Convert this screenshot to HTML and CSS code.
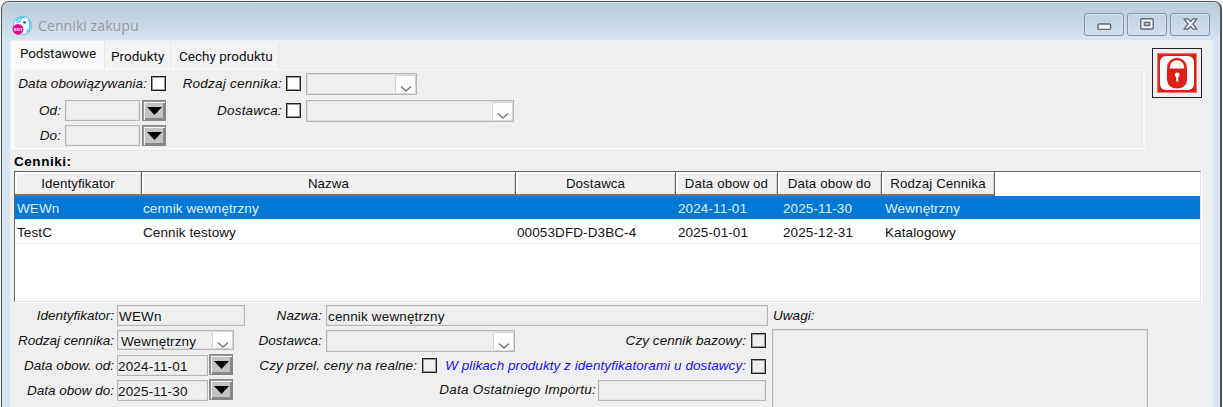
FILE: index.html
```html
<!DOCTYPE html>
<html lang="pl">
<head>
  <meta charset="UTF-8">
  <title>Cenniki zakupu</title>
  <link rel="stylesheet" href="styles.css">
</head>
<body>
  <svg width="0" height="0" class="defs">
    <symbol id="chevron" viewBox="0 0 12 8"><path d="M1 1.5 L6 6 L11 1.5" fill="none" stroke="#777" stroke-width="1.4"/></symbol>
    <symbol id="arrow" viewBox="0 0 15 8"><path d="M0 0 H15 L7.5 8 Z" fill="#000"/></symbol>
  </svg>
  <div class="window">
    <div class="titlebar">
      <svg class="app-icon" width="21" height="21" viewBox="0 0 21 21">
        <circle cx="10.5" cy="10.5" r="9.3" fill="#e6f7fd" stroke="#62c6ea" stroke-width="1"/>
        <path d="M4 6 Q8 1 13 3 M16.5 4.5 Q20 10 16 17 M5 8 L9 5" fill="none" stroke="#48b9e4" stroke-width="1.3"/>
        <path d="M8 2 L10 4 L8 7 Z M15 14 L18 14 L14 19 Z" fill="#7ed0ee"/>
        <circle cx="12.5" cy="7.5" r="1.3" fill="#145a87"/>
        <circle cx="6" cy="14.3" r="5.4" fill="#e5098a"/>
        <text x="1.9" y="16" class="app-text">EXIT</text>
      </svg>
      <span class="title">Cenniki zakupu</span>
      <div class="win-buttons">
        <div class="win-btn"><svg width="15" height="8" viewBox="0 0 15 8"><rect x="1" y="1" width="12.6" height="5.4" rx="1" fill="#f5f5f5" stroke="#626a76" stroke-width="1.4"/></svg></div>
        <div class="win-btn restore"><svg width="14" height="12" viewBox="0 0 14 12"><rect x=".8" y=".8" width="12.4" height="10.2" rx="1" fill="#f5f5f5" stroke="#626a76" stroke-width="1.4"/><rect x="4.3" y="4.3" width="5.4" height="3.2" fill="#b5c5d5" stroke="#626a76" stroke-width="1.3"/></svg></div>
        <div class="win-btn restore"><svg width="15" height="12" viewBox="0 0 15 12"><path d="M1 .8 H4.8 L7.5 3.4 L10.2 .8 H14 L9.8 6 L14 11.2 H10.2 L7.5 8.5 L4.8 11.2 H1 L5.2 6 Z" fill="#f5f5f5" stroke="#626a76" stroke-width="1.3" stroke-linejoin="round"/></svg></div>
      </div>
    </div>

    <div class="client">
      <div class="top">
        <div class="tab-control">
          <div class="tabs">
            <div class="tab active">Podstawowe</div>
            <div class="tab produkty">Produkty</div>
            <div class="tab cechy">Cechy produktu</div>
          </div>
          <div class="tab-panel">
            <div class="filter-dates">
              <div class="line first"><label class="obow">Data obowiązywania:</label><span class="check"></span></div>
              <div class="line"><label>Od:</label><span class="field date"></span><span class="drop"><svg width="15" height="8"><use href="#arrow"/></svg></span></div>
              <div class="line"><label>Do:</label><span class="field date"></span><span class="drop"><svg width="15" height="8"><use href="#arrow"/></svg></span></div>
            </div>
            <div class="filter-type">
              <div class="line first"><label>Rodzaj cennika:</label><span class="check"></span><span class="select kind"><i><svg width="12" height="8"><use href="#chevron"/></svg></i></span></div>
              <div class="line"><label>Dostawca:</label><span class="check"></span><span class="select supplier"><i><svg width="12" height="8"><use href="#chevron"/></svg></i></span></div>
            </div>
          </div>
        </div>
        <div class="lock">
          <svg width="40" height="40" viewBox="0 0 40 40">
            <rect width="40" height="40" fill="#de2018"/>
            <rect x=".5" y=".5" width="39" height="39" fill="none" stroke="#f0766f"/>
            <rect x="3" y="3" width="34" height="34" rx="6" fill="#fff"/>
            <path d="M11.5 17 V14 A8.5 8 0 0 1 28.5 14 V17" fill="none" stroke="#de2018" stroke-width="2.6"/>
            <path d="M10 15.5 H30 V27 Q29 35.5 20 35.5 Q11 35.5 10 27 Z" fill="#de2018"/>
            <path d="M17.8 22.5 A2.4 2.4 0 1 1 21.3 24 V28.5 H19.2 V24 Z" fill="#fff"/>
          </svg>
        </div>
      </div>

      <div class="list-title">Cenniki:</div>
      <div class="list">
        <div class="row head">
          <div>Identyfikator</div><div>Nazwa</div><div>Dostawca</div><div>Data obow od</div><div>Data obow do</div><div>Rodzaj Cennika</div>
        </div>
        <div class="row selected">
          <div>WEWn</div><div>cennik wewnętrzny</div><div></div><div>2024-11-01</div><div>2025-11-30</div><div>Wewnętrzny</div>
        </div>
        <div class="row">
          <div>TestC</div><div>Cennik testowy</div><div>00053DFD-D3BC-4</div><div>2025-01-01</div><div>2025-12-31</div><div>Katalogowy</div>
        </div>
      </div>

      <div class="details">
        <div class="col-left">
          <div class="line"><label>Identyfikator:</label><span class="field id">WEWn</span></div>
          <div class="line"><label>Rodzaj cennika:</label><span class="select type">Wewnętrzny<i><svg width="12" height="8"><use href="#chevron"/></svg></i></span></div>
          <div class="line"><label>Data obow. od:</label><span class="field day">2024-11-01</span><span class="drop"><svg width="15" height="8"><use href="#arrow"/></svg></span></div>
          <div class="line"><label>Data obow do:</label><span class="field day">2025-11-30</span><span class="drop"><svg width="15" height="8"><use href="#arrow"/></svg></span></div>
        </div>
        <div class="col-mid">
          <div class="line"><label class="short">Nazwa:</label><span class="field name">cennik wewnętrzny</span></div>
          <div class="line"><label class="short">Dostawca:</label><span class="select sup"><i><svg width="12" height="8"><use href="#chevron"/></svg></i></span><label class="push">Czy cennik bazowy:</label><span class="check"></span></div>
          <div class="line"><label class="real">Czy przel. ceny na realne:</label><span class="check"></span><label class="push files">W plikach produkty z identyfikatorami u dostawcy:</label><span class="check low"></span></div>
          <div class="line"><label class="push import">Data Ostatniego Importu:</label><span class="field imp"></span></div>
        </div>
        <div class="col-right">
          <label>Uwagi:</label>
          <div class="memo"></div>
        </div>
      </div>
    </div>
  </div>
</body>
</html>
```

FILE: styles.css
```css
* {
  box-sizing: border-box;
}
body {
  margin: 0;
  width: 1223px;
  height: 407px;
  overflow: hidden;
  background: #f3f5f3;
  font-family: "Liberation Sans", Arial, sans-serif;
  font-size: 13.5px;
  line-height: 20px;
  color: #111;
  white-space: nowrap;
}
svg {
  display: block;
}
.defs {
  position: absolute;
}
.window {
  width: 1221px;
  height: 420px;
  margin: 1px 0 0 1px;
  border: 1px solid #555;
  border-right-width: 2px;
  border-radius: 8px 8px 0 0;
  background: #d7e4f1;
  overflow: hidden;
}
.titlebar {
  display: flex;
  height: 38px;
  padding: 12px 10px 0 10px;
  border-top: 1px solid #d3dde5;
  background: linear-gradient(#b9cad7, #d7e4f2);
}
.app-text {
  font-size: 4px;
  font-weight: bold;
  fill: #fff;
}
.title {
  margin: 1px 0 0 5px;
  font-family: "Open Sans", sans-serif;
  font-size: 14.2px;
  line-height: 20px;
  color: #97999d;
}
.win-buttons {
  display: flex;
  gap: 3px;
  margin: -2px 0 0 auto;
}
.win-btn {
  display: flex;
  justify-content: center;
  width: 40px;
  height: 23px;
  padding-top: 9px;
  border: 1px solid #8393ad;
  border-radius: 3px;
  box-shadow: inset 0 0 0 1px #d4e0ea;
}
.win-btn.restore {
  padding-top: 4px;
}
.client {
  height: 380px;
  margin: 0 7px 0 8px;
  background: #efefef;
}

/* tabs and filters */
.top {
  display: flex;
  height: 110px;
  padding-left: 1px;
}
.tab-control {
  width: 1134px;
}
.tabs {
  display: flex;
  align-items: flex-end;
  height: 29px;
}
.tab {
  height: 26px;
  padding: 3px 0 0 6px;
  border-right: 1px solid #e6e6e6;
  background: #f3f3f3;
  font-family: Roboto, sans-serif;
  font-size: 13.5px;
}
.tab.active {
  width: 94px;
  height: 28px;
  padding: 2px 0 0 9px;
  background: #fafafa;
  letter-spacing: -0.15px;
}
.tab.produkty {
  width: 66px;
}
.tab.cechy {
  width: 108px;
  padding-left: 8px;
}
.tab-panel {
  display: flex;
  height: 81px;
  padding-top: 3px;
  border: 2px solid #f8f8f8;
  border-left-width: 4px;
  border-top-width: 1px;
  box-shadow: inset -1px 0 #e8e8e8, 0 -1px #e8e8e8, 0 1px #e4e4e4;
}
.line {
  display: flex;
  align-items: flex-start;
  height: 25px;
}
label {
  padding-top: 1px;
  font-style: italic;
  text-align: right;
  letter-spacing: 0.06px;
}
.filter-dates {
  width: 151px;
}
.filter-dates label {
  width: 46px;
  margin-right: 4px;
}
.filter-dates .obow {
  width: 132px;
  margin-right: 4px;
}
.filter-type {
  margin-left: 2px;
}
.filter-type label {
  width: 114px;
  margin-right: 4px;
  letter-spacing: 0.22px;
}
.line.first {
  height: 27px;
}
.tab-panel .first .check {
  margin-top: 3px;
}
.field {
  height: 21px;
  padding-left: 1px;
  border: 1px solid #b4b4bb;
  box-shadow: inset 0 0 0 1px #e6e6e9;
  line-height: 21px;
  letter-spacing: 0.15px;
}
.check {
  flex: none;
  width: 15px;
  height: 15px;
  margin-top: 3px;
  border: 1px solid #222;
  background: #fff;
  box-shadow: inset 0 0 0 1px #999;
}
.date {
  width: 75px;
}
.drop {
  display: flex;
  align-items: center;
  justify-content: center;
  width: 24px;
  height: 21px;
  margin-left: 2px;
  border: 1px solid #888;
  background: #c3c3c3;
  box-shadow: inset 1px 1px #999, inset 2px 2px #f4f4f4, inset -2px -2px #888;
}
.select {
  display: flex;
  height: 22px;
  border: 1px solid #b4b4bb;
  box-shadow: inset 0 0 0 1px #dedee2;
}
.select i {
  display: flex;
  justify-content: center;
  width: 21px;
  height: 19px;
  margin: 1px 0 0 auto;
  padding-top: 9px;
  border: 1px solid #d5d5d5;
  border-radius: 2px;
  background: #fdfdfd;
}
.filter-type .select {
  margin-left: 5px;
}
.kind {
  width: 111px;
}
.supplier {
  width: 208px;
}
.lock {
  width: 50px;
  height: 50px;
  margin: 8px 0 0 7px;
  padding: 4px;
  border: 1px solid #222;
}

/* price lists */
.list-title {
  height: 21px;
  padding-left: 4px;
  font-weight: bold;
  line-height: 23px;
  letter-spacing: 0.55px;
  color: #000;
}
.list {
  width: 1187px;
  height: 131px;
  margin-left: 4px;
  border: 1px solid #666;
  border-right-color: #e3e3e3;
  border-bottom-color: #e3e3e3;
  box-shadow: 1px 1px #fff;
  background: #fff;
}
.row {
  display: grid;
  grid-template-columns: 127px 374px 160px 102px 104px 113px;
  height: 24px;
  border-bottom: 1px solid #ececec;
  line-height: 26px;
  letter-spacing: 0.1px;
}
.row div {
  padding-left: 2px;
}
.row div:nth-child(2),
.row div:nth-child(3) {
  padding-left: 1px;
}
.row div:nth-child(5) {
  padding-left: 5px;
}
.row div:nth-child(6) {
  padding-left: 3px;
}
.row.head {
  border: 0;
  line-height: 20px;
}
.row.head div {
  height: 24px;
  padding: 2px 0 0;
  border-right: 1px solid #666;
  border-bottom: 2px solid #777;
  box-shadow: inset 2px 2px #fff, inset -1px 0 #ccc;
  background: #f0f0f0;
  text-align: center;
  font-size: 13.3px;
}
.row.selected {
  background: #0078d7;
  color: #e3f0fb;
}

/* selected price list */
.details {
  display: flex;
  height: 103px;
  margin-top: 3px;
}
.col-left {
  width: 235px;
}
.col-left label {
  width: 104px;
  margin-right: 3px;
  letter-spacing: 0;
}
.col-left .drop {
  margin-left: 1px;
  margin-top: -1px;
}
.id {
  width: 128px;
}
.type {
  width: 117px;
  height: 20px;
  padding-left: 3px;
  line-height: 21px;
  letter-spacing: 0.1px;
}
.type i {
  height: 18px;
  margin-top: 0;
}
.day {
  width: 91px;
  padding-left: 0;
}
.col-mid {
  width: 523px;
}
.col-mid label {
  margin-right: 5px;
}
.col-mid .short {
  width: 77px;
  margin-right: 4px;
}
.col-mid .real {
  width: 172px;
}
.col-mid .push {
  margin-left: auto;
}
.col-mid .import {
  margin-right: 2px;
  padding-top: 0;
  letter-spacing: 0.25px;
}
.col-mid .check {
  margin-right: 2px;
  background: transparent;
}
.col-mid .real + .check {
  margin-right: 0;
}
.name {
  width: 442px;
}
.sup {
  width: 189px;
}
.check.low {
  margin-top: 4px;
}
.files {
  color: #1a12f0;
}
.imp {
  width: 168px;
  margin-right: 2px;
}
.col-right {
  padding-left: 4px;
}
.col-right label {
  padding-left: 1px;
  line-height: 22px;
}
.memo {
  width: 376px;
  height: 90px;
  margin-top: 2px;
  border: 1px solid #b4b4bb;
  box-shadow: inset 0 0 0 1px #e3e3e6;
}
```
